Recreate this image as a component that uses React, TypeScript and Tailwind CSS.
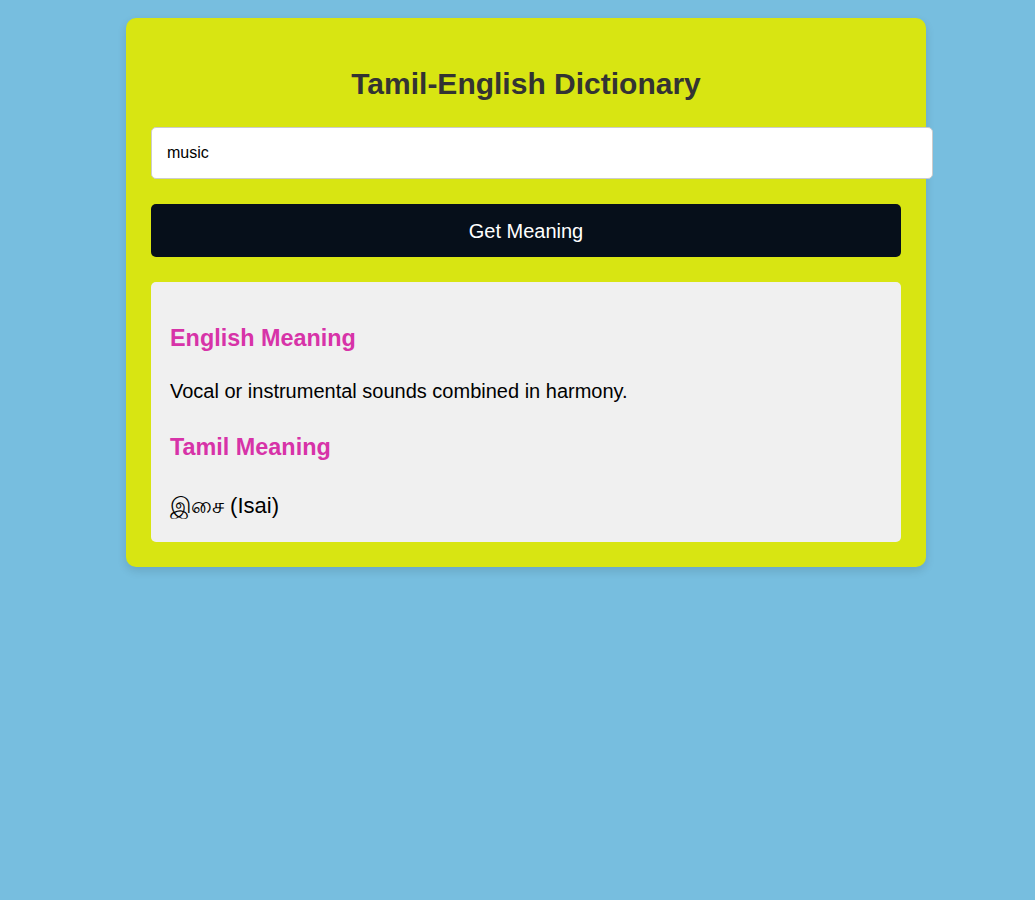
import { useState } from "react";

const sans = "font-['Liberation_Sans',Arial,sans-serif]";

export default function App() {
  const [word, setWord] = useState("music");

  return (
    <div className={`min-h-[900px] bg-[#77bedf] pt-[18px] ${sans}`}>
      <div className="ml-[126px] w-[800px] rounded-[10px] bg-[#d8e512] p-[25px] shadow-[0_4px_10px_rgba(0,0,0,0.12)]">
        {/* Title */}
        <h1 className="mt-[24px] mb-[26px] text-center text-[30px] leading-[34px] font-bold text-[#333333]">
          Tamil-English Dictionary
        </h1>

        {/* Search */}
        <input
          type="text"
          value={word}
          onChange={(e) => setWord(e.target.value)}
          className="block h-[52px] w-[782px] rounded-[5px] border border-[#cccccc] bg-white px-[15px] text-[16px] text-black outline-none"
        />

        <button className="mt-[25px] block h-[53px] w-full rounded-[5px] bg-[#060f1a] text-[20px] text-white">
          Get Meaning
        </button>

        {/* Result */}
        <div className="mt-[25px] rounded-[5px] bg-[#f0f0f0] px-[19px] pt-[20px] pb-[1px] text-[20px] text-black">
          <h3 className="mt-[23px] mb-[28px] text-[23.4px] leading-[27px] font-bold text-[#d733a8]">
            English Meaning
          </h3>
          <p className="mb-[31px] leading-[23px]">
            Vocal or instrumental sounds combined in harmony.
          </p>
          <h3 className="mb-[30px] text-[23.4px] leading-[27px] font-bold text-[#d733a8]">
            Tamil Meaning
          </h3>
          <p className="mb-[20px] text-[22px] leading-[30px]">இசை (Isai)</p>
        </div>
      </div>
    </div>
  );
}
